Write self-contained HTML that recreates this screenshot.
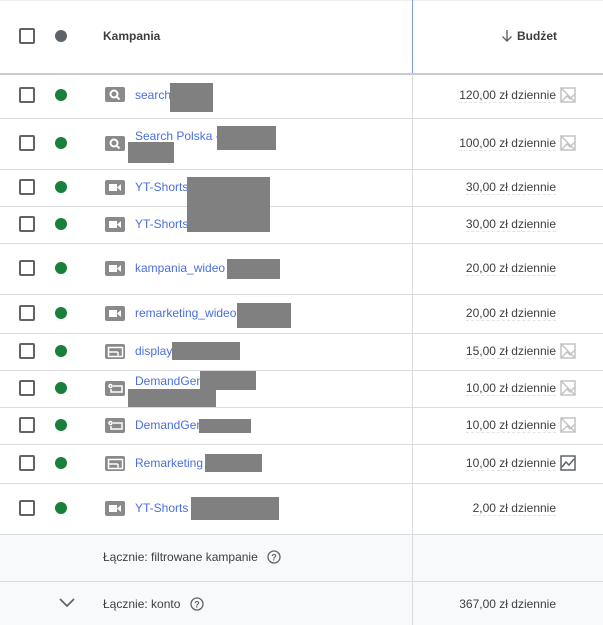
<!DOCTYPE html>
<html><head><meta charset="utf-8"><style>
*{margin:0;padding:0;box-sizing:border-box}
body{width:603px;height:625px;overflow:hidden;background:#fff;font-family:"Liberation Sans",sans-serif;font-size:12px;color:#3c4043;position:relative}
.a{position:absolute}
.hl{position:absolute;left:0;width:603px;height:1px;background:#dadce0}
.cb{position:absolute;left:19px;width:16px;height:16px;border:2px solid #5f6368;border-radius:2px}
.dot{position:absolute;left:55px;width:12px;height:12px;border-radius:50%;background:#188038}
.ic{position:absolute;left:105px;width:20px;height:15px;background:#8a8a8a;border-radius:2px}
.nm{position:absolute;left:135px;color:#4a6ee0;font-size:12px;line-height:14px;white-space:nowrap}
.gb{position:absolute;background:#808080}
.bd{position:absolute;right:47px;font-size:12px;line-height:14px;border-bottom:1px dashed #e3e3e3;white-space:nowrap}
.vl{position:absolute;left:412px;width:1px;background:#dadce0}
</style></head><body>
<div class="a" style="left:0;top:0;width:603px;height:1px;background:#eee"></div>
<div class="cb" style="top:28px"></div>
<div class="dot" style="top:30px;background:#5f6368"></div>
<div class="a" style="left:103px;top:29px;font-size:12px;font-weight:bold;color:#3c4043">Kampania</div>
<div class="a" style="left:412px;top:0;width:1px;height:73px;background:#7b9be6"></div>
<svg class="a" style="left:500px;top:28px" width="14" height="16"><path d="M7 2v11M2.5 8.5L7 13l4.5-4.5" fill="none" stroke="#5f6368" stroke-width="1.4"/></svg>
<div class="a" style="right:46px;top:29px;font-weight:bold">Budżet</div>
<div class="a" style="left:0;top:73px;width:603px;height:2px;background:#c9cbce"></div>
<div class="vl" style="top:75px;height:550px"></div>
<div class="hl" style="top:118px"></div>
<div class="hl" style="top:169px"></div>
<div class="hl" style="top:206px"></div>
<div class="hl" style="top:243px"></div>
<div class="hl" style="top:294px"></div>
<div class="hl" style="top:333px"></div>
<div class="hl" style="top:370px"></div>
<div class="hl" style="top:407px"></div>
<div class="hl" style="top:444px"></div>
<div class="hl" style="top:483px"></div>
<div class="a" style="left:0;top:534px;width:603px;height:91px;background:#f8f9fa"></div>
<div class="hl" style="top:534px"></div>
<div class="hl" style="top:581px"></div>
<div class="vl" style="top:535px;height:90px"></div>

<div class="cb" style="top:87px"></div><div class="dot" style="top:89px"></div><div class="ic" style="top:87px"></div><div class="nm" style="top:88px">search</div><div class="bd" style="top:88px">120,00 zł dziennie</div>
<div class="cb" style="top:135px"></div><div class="dot" style="top:137px"></div><div class="ic" style="top:136px"></div><div class="nm" style="top:129px">Search Polska -</div><div class="bd" style="top:136px">100,00 zł dziennie</div>
<div class="cb" style="top:179px"></div><div class="dot" style="top:181px"></div><div class="ic" style="top:180px"></div><div class="nm" style="top:180px">YT-Shorts</div><div class="bd" style="top:180px">30,00 zł dziennie</div>
<div class="cb" style="top:216px"></div><div class="dot" style="top:218px"></div><div class="ic" style="top:217px"></div><div class="nm" style="top:217px">YT-Shorts</div><div class="bd" style="top:217px">30,00 zł dziennie</div>
<div class="cb" style="top:260px"></div><div class="dot" style="top:262px"></div><div class="ic" style="top:261px"></div><div class="nm" style="top:261px">kampania_wideo</div><div class="bd" style="top:261px">20,00 zł dziennie</div>
<div class="cb" style="top:305px"></div><div class="dot" style="top:307px"></div><div class="ic" style="top:306px"></div><div class="nm" style="top:306px">remarketing_wideo</div><div class="bd" style="top:306px">20,00 zł dziennie</div>
<div class="cb" style="top:343px"></div><div class="dot" style="top:345px"></div><div class="ic" style="top:344px"></div><div class="nm" style="top:344px">display</div><div class="bd" style="top:344px">15,00 zł dziennie</div>
<div class="cb" style="top:380px"></div><div class="dot" style="top:382px"></div><div class="ic" style="top:381px"></div><div class="nm" style="top:374px">DemandGen</div><div class="bd" style="top:381px">10,00 zł dziennie</div>
<div class="cb" style="top:417px"></div><div class="dot" style="top:419px"></div><div class="ic" style="top:418px"></div><div class="nm" style="top:418px">DemandGen</div><div class="bd" style="top:418px">10,00 zł dziennie</div>
<div class="cb" style="top:455px"></div><div class="dot" style="top:457px"></div><div class="ic" style="top:456px"></div><div class="nm" style="top:456px">Remarketing</div><div class="bd" style="top:456px">10,00 zł dziennie</div>
<div class="cb" style="top:500px"></div><div class="dot" style="top:502px"></div><div class="ic" style="top:501px"></div><div class="nm" style="top:501px">YT-Shorts</div><div class="bd" style="top:501px">2,00 zł dziennie</div>

<svg class="a" style="left:0;top:0" width="603" height="625">
<g fill="none" stroke="#fff" stroke-width="2"><circle cx="114" cy="94" r="3.5"/><line x1="117" y1="97" x2="119.5" y2="99.5"/><circle cx="114" cy="143" r="3.5"/><line x1="117" y1="146" x2="119.5" y2="148.5"/></g>
<g fill="#fff">
<rect x="109" y="184" width="8" height="7"/><polygon points="117,187.5 121,184 121,191"/>
<rect x="109" y="221" width="8" height="7"/><polygon points="117,224.5 121,221 121,228"/>
<rect x="109" y="265" width="8" height="7"/><polygon points="117,268.5 121,265 121,272"/>
<rect x="109" y="310" width="8" height="7"/><polygon points="117,313.5 121,310 121,317"/>
<rect x="109" y="505" width="8" height="7"/><polygon points="117,508.5 121,505 121,512"/>
</g>
<g fill="none" stroke="#fff" stroke-width="1.5">
<rect x="108.5" y="347.5" width="14" height="9"/><line x1="108" y1="352" x2="118" y2="352"/><line x1="118" y1="352" x2="118" y2="357"/>
<rect x="108.5" y="459.5" width="14" height="9"/><line x1="108" y1="464" x2="118" y2="464"/><line x1="118" y1="464" x2="118" y2="469"/>
<circle cx="110.5" cy="386" r="1.5"/><path d="M113 386h9v6h-11v-3"/>
<circle cx="110.5" cy="423" r="1.5"/><path d="M113 423h9v6h-11v-3"/>
</g>
<g fill="none" stroke="#c4c4c4" stroke-width="1.5">
<path d="M561 88h14v14h-14z M561 88l14 14 M561 102l6-6 3 3 5-5"/>
<path d="M561 136h14v14h-14z M561 136l14 14 M561 150l6-6 3 3 5-5"/>
<path d="M561 344h14v14h-14z M561 344l14 14 M561 358l6-6 3 3 5-5"/>
<path d="M561 381h14v14h-14z M561 381l14 14 M561 395l6-6 3 3 5-5"/>
<path d="M561 418h14v14h-14z M561 418l14 14 M561 432l6-6 3 3 5-5"/>
</g>
<g fill="none" stroke="#5f6368" stroke-width="1.5"><path d="M561 456h14v14h-14z M562 467l4-5 3 3 5-6"/></g>
<path d="M60 599l7 7 7-7" fill="none" stroke="#5f6368" stroke-width="1.8"/>
<g fill="none" stroke="#5f6368" stroke-width="1.3"><circle cx="274" cy="557" r="6"/><circle cx="197" cy="604" r="6"/></g>
<g fill="#5f6368" font-family="Liberation Sans" font-size="9" font-weight="bold" text-anchor="middle"><text x="274" y="560.5">?</text><text x="197" y="607.5">?</text></g>
</svg>

<div class="gb" style="left:170px;top:83px;width:43px;height:29px"></div>
<div class="gb" style="left:217px;top:126px;width:59px;height:24px"></div>
<div class="gb" style="left:128px;top:142px;width:46px;height:21px"></div>
<div class="gb" style="left:187px;top:177px;width:83px;height:55px"></div>
<div class="gb" style="left:227px;top:259px;width:53px;height:20px"></div>
<div class="gb" style="left:237px;top:303px;width:54px;height:25px"></div>
<div class="gb" style="left:172px;top:342px;width:68px;height:18px"></div>
<div class="gb" style="left:200px;top:371px;width:56px;height:19px"></div>
<div class="gb" style="left:128px;top:389px;width:88px;height:18px"></div>
<div class="gb" style="left:199px;top:419px;width:52px;height:14px"></div>
<div class="gb" style="left:205px;top:454px;width:57px;height:18px"></div>
<div class="gb" style="left:191px;top:497px;width:88px;height:23px"></div>

<div class="a" style="left:103px;top:550px">Łącznie: filtrowane kampanie</div>
<div class="a" style="left:103px;top:597px">Łącznie: konto</div>
<div class="a" style="right:47px;top:597px">367,00 zł dziennie</div>
</body></html>
